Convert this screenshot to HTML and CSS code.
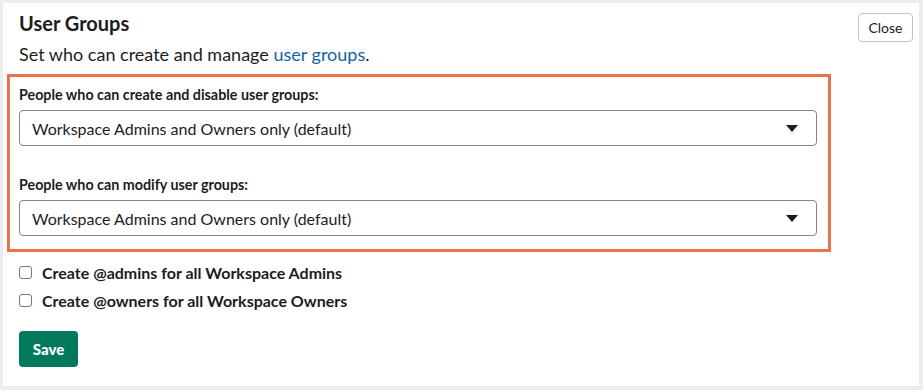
FILE: index.html
```html
<!DOCTYPE html>
<html lang="en">
<head>
    <meta charset="UTF-8">
    <title>User Groups</title>
    <link rel="stylesheet" href="styles.css">
</head>
<body>
    <div class="panel">
        <!-- Header -->
        <div class="header">
            <div class="intro">
                <h1>User Groups</h1>
                <p>Set who can create and manage <a href="#">user groups</a>.</p>
            </div>
            <button class="close-btn">Close</button>
        </div>

        <!-- Permissions -->
        <div class="highlight">
            <label class="field-label">People who can create and disable user groups:</label>
            <div class="select">
                <span>Workspace Admins and Owners only (default)</span>
                <span class="caret"></span>
            </div>

            <label class="field-label second">People who can modify user groups:</label>
            <div class="select">
                <span>Workspace Admins and Owners only (default)</span>
                <span class="caret"></span>
            </div>
        </div>

        <!-- Options -->
        <div class="options">
            <label class="check-row"><input type="checkbox"> Create @admins for all Workspace Admins</label>
            <label class="check-row"><input type="checkbox"> Create @owners for all Workspace Owners</label>
        </div>

        <button class="save-btn">Save</button>
    </div>
</body>
</html>
```

FILE: styles.css
```css
/* Page */
body {
    margin: 0;
    padding: 3px 4px 4px 3px;
    background: #ededed;
    font-family: Lato, 'Noto Sans', sans-serif;
    color: #1d1c1d;
}

.panel {
    background: #fff;
    height: 383px;
    box-sizing: border-box;
    padding: 7px 6px 0 16px;
}

/* Header */
.header {
    display: flex;
    justify-content: space-between;
    align-items: flex-start;
}

h1 {
    margin: 1px 0 0;
    font-size: 20px;
    line-height: 24px;
    font-weight: 700;
}

.intro p {
    margin: 7px 0 0;
    font-size: 18px;
    line-height: 24px;
}

.intro a {
    color: #1264a3;
    text-decoration: none;
}

.close-btn {
    width: 55px;
    height: 29px;
    padding: 0;
    background: #fff;
    border: 1px solid #c4c4c4;
    border-radius: 4px;
    font-family: inherit;
    font-size: 14px;
    color: #1d1c1d;
    margin-top: 3px;
}

/* Highlighted block */
.highlight {
    width: 798px;
    margin: 8px 0 0 -12px;
    padding: 8px 11px 13px 9px;
    border: 3px solid #e8734a;
}

.field-label {
    display: block;
    font-size: 14.3px;
    font-weight: 700;
    line-height: 20px;
    margin-bottom: 5px;
}

.field-label.second {
    margin-top: 29px;
}

.select {
    height: 36px;
    box-sizing: border-box;
    border: 1px solid #868686;
    border-radius: 4px;
    display: flex;
    align-items: center;
    justify-content: space-between;
    padding: 0 18px 0 12px;
    font-size: 16px;
}

.caret {
    width: 0;
    height: 0;
    border-left: 6px solid transparent;
    border-right: 6px solid transparent;
    border-top: 7px solid #1d1c1d;
}

/* Checkboxes */
.options {
    margin-top: 6px;
}

.check-row {
    display: flex;
    align-items: center;
    height: 28px;
    font-size: 16px;
    font-weight: 700;
}

.check-row input {
    appearance: none;
    width: 13px;
    height: 13px;
    margin: 0 10px 0 0;
    border: 1px solid #767676;
    border-radius: 3px;
    box-sizing: border-box;
}

.save-btn {
    margin-top: 17px;
    width: 59px;
    height: 36px;
    border: none;
    border-radius: 4px;
    background: #007a5a;
    color: #fff;
    font-family: inherit;
    font-size: 15px;
    font-weight: 900;
}
```
